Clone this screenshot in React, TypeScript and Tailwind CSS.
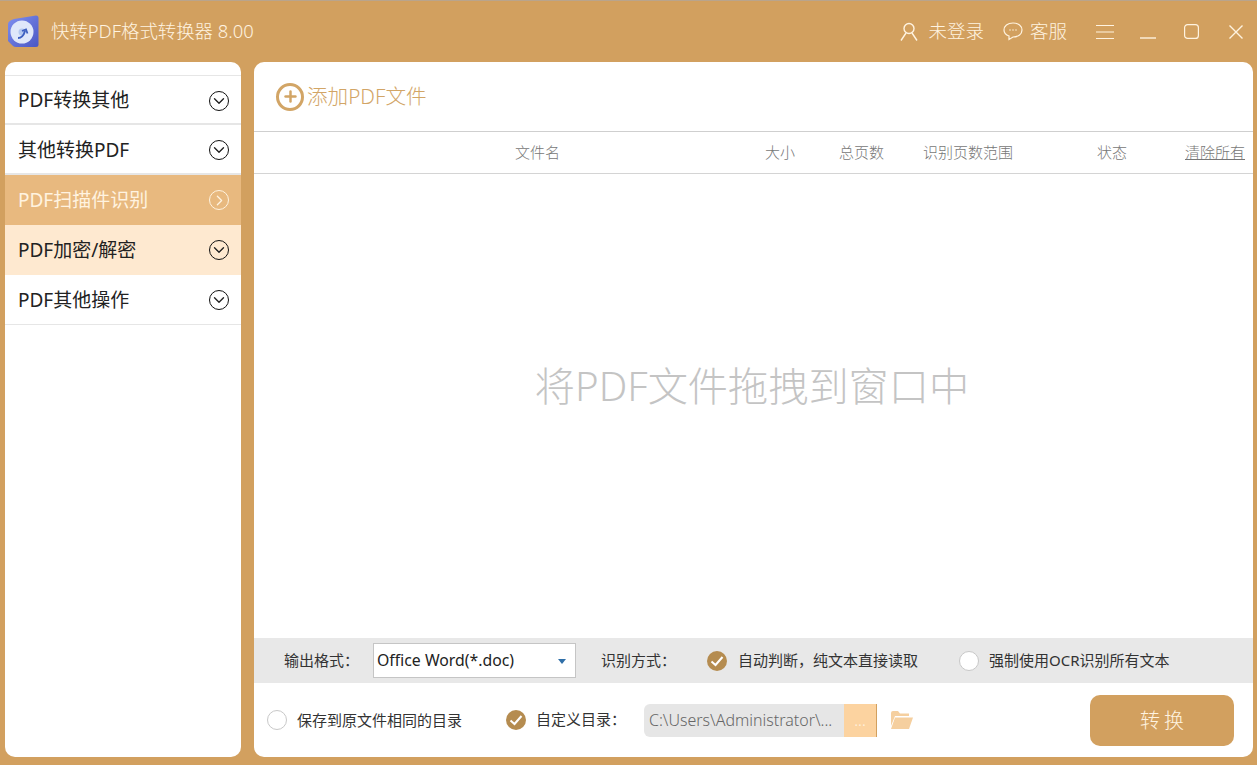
import { ChevronDown, ChevronRight, Plus } from "lucide-react";

const font = { fontFamily: '"Noto Sans", "Noto Sans CJK SC", sans-serif' };

const menu = [
  { label: "PDF转换其他", cls: "h-[49px] pt-[2px] bg-white text-[#222] border-b-2 border-[#e6e6e6]" },
  { label: "其他转换PDF", cls: "h-[50px] pt-[2px] bg-white text-[#222] border-b-2 border-[#e6e6e6]" },
  { label: "PDF扫描件识别", cls: "h-[50px] bg-[#e8b97f] text-[#fff3e0]", active: true },
  { label: "PDF加密/解密", cls: "h-[50px] bg-[#fee9d0] text-[#222]" },
  { label: "PDF其他操作", cls: "h-[50px] pt-px bg-white text-[#222] border-b border-[#e6e6e6]" },
];

function Logo() {
  return (
    <svg width="34" height="34" viewBox="0 0 34 34">
      <defs>
        <linearGradient id="lg" x1="0" y1="0" x2="1" y2="1">
          <stop offset="0" stopColor="#7f8ff0" />
          <stop offset="1" stopColor="#4a57c4" />
        </linearGradient>
      </defs>
      <path d="M8 4 L30 0.500 Q32.500 0.500 32.500 3 L32.500 30 Q32.500 32 30 32 L10 32 Q8 32 7 31 L2 26 L2 9 Q2 6 8 4 Z" fill="url(#lg)" />
      <circle cx="16" cy="17" r="11.500" fill="#dfe7fa" />
      <circle cx="16" cy="17" r="3.500" fill="#b4c8f0" />
      <path d="M12 23 Q17 23 19 16 M16 16 L20 14.500 L21.500 18.500" fill="none" stroke="#3d5fc0" strokeWidth="1.800" />
    </svg>
  );
}

function Check({ size }: { size: number }) {
  return (
    <span className="flex shrink-0 items-center justify-center rounded-full bg-[#b58c50]" style={{ width: size, height: size }}>
      <svg width="14" height="12" viewBox="0 0 14 12">
        <path d="M1.500 6.500 L5.500 10 L12.500 2" fill="none" stroke="#fff" strokeWidth="2" />
      </svg>
    </span>
  );
}

function Radio() {
  return <span className="h-5 w-5 shrink-0 rounded-full border border-[#c8c8c8] bg-white" />;
}

export default function App() {
  return (
    <div className="flex h-[765px] w-[1257px] flex-col overflow-hidden border-t border-[#b9a48c] bg-[#d2a05f]" style={font}>
      <header className="flex h-[61px] shrink-0 items-center pl-[6px] pr-[14px] text-[#fff3e0]">
        <Logo />
        <span className="-mt-[2px] ml-[11px] text-[18.400px] font-light">快转PDF格式转换器 8.00</span>
        <div className="ml-auto flex items-center">
          <svg width="20" height="20" viewBox="0 0 20 20" fill="none" stroke="#fff3e0" strokeWidth="1.400">
            <circle cx="10" cy="6.500" r="5" />
            <path d="M7 11 L2 18.500 M13 11 L18 18.500" />
          </svg>
          <span className="-mt-[2px] ml-[9px] text-[18.500px] font-light">未登录</span>
          <svg className="ml-[19px]" width="20" height="19" viewBox="0 0 20 19" fill="none" stroke="#fff3e0" strokeWidth="1.200">
            <path d="M10 1 C4.500 1 1 4 1 8 C1 11 3 13 6 14 L6 17.500 L10 15 C15.500 15 19 12 19 8 C19 4 15.500 1 10 1 Z" />
            <path d="M6.500 8 H7.500 M9.500 8 H10.500 M12.500 8 H13.500" strokeWidth="1.500" />
          </svg>
          <span className="-mt-[2px] ml-[7px] text-[18.500px] font-light">客服</span>
          <svg className="ml-[29px]" width="18" height="16" viewBox="0 0 18 16" stroke="#fff3e0" strokeWidth="1.200">
            <path d="M0 1.500 H18 M0 8 H18 M0 14.500 H18" />
          </svg>
          <svg className="ml-[26px]" width="16" height="16" viewBox="0 0 16 16" stroke="#fff3e0" strokeWidth="1.400">
            <path d="M0 14 H16" />
          </svg>
          <svg className="ml-[28px]" width="15" height="15" viewBox="0 0 15 15" fill="none" stroke="#fff3e0" strokeWidth="1.200">
            <rect x="0.600" y="0.600" width="13.800" height="13.800" rx="3" />
          </svg>
          <svg className="ml-[30px]" width="14" height="14" viewBox="0 0 14 14" stroke="#fff3e0" strokeWidth="1.400">
            <path d="M0.500 0.500 L13.500 13.500 M13.500 0.500 L0.500 13.500" />
          </svg>
        </div>
      </header>

      <div className="flex h-[695px] gap-[13px] pl-[5px] pr-[4px]">
        <aside className="w-[236px] shrink-0 overflow-hidden rounded-[10px] bg-white pt-[13px]">
          <div className="h-px bg-[#e6e6e6]" />
          {menu.map((m) => (
            <div key={m.label} className={`box-border flex items-center justify-between pl-[13px] pr-[12px] text-[19px] ${m.cls}`}>
              <span>{m.label}</span>
              <span className={`flex h-5 w-5 items-center justify-center rounded-full border-[1.500px] ${m.active ? "border-[#fff3e0]" : "border-[#111]"}`}>
                {m.active ? <ChevronRight size={17} strokeWidth={1.800} /> : <ChevronDown size={18} strokeWidth={1.800} />}
              </span>
            </div>
          ))}
        </aside>

        <main className="flex flex-1 flex-col overflow-hidden rounded-[10px] bg-white">
          <div className="flex h-[70px] shrink-0 items-center border-b border-[#cfcfcf] pl-[22px] text-[#d2a566]">
            <span className="flex h-[28px] w-[28px] items-center justify-center rounded-full border-[3px] border-[#d2a566]">
              <Plus size={17} strokeWidth={3.500} />
            </span>
            <span className="ml-[3px] text-[20.600px] font-light">添加PDF文件</span>
          </div>
          <div className="flex h-[42px] shrink-0 items-center border-b border-[#d4d4d4] pl-[261px] text-[15px] font-light text-[#777]">
            <span className="w-[250px]">文件名</span>
            <span className="w-[74px]">大小</span>
            <span className="w-[84px]">总页数</span>
            <span className="w-[174px]">识别页数范围</span>
            <span className="w-[88px]">状态</span>
            <span className="underline">清除所有</span>
          </div>
          <div className="flex flex-1 items-center justify-center pb-[40px] pr-[3px] text-[40.200px] font-light text-[#c4c4c4]">将PDF文件拖拽到窗口中</div>

          <div className="flex h-[45px] shrink-0 items-center bg-[#e8e8e8] pl-[30px] text-[15px] text-[#333]">
            <span className="w-[89px]">输出格式：</span>
            <div className="flex h-[35px] w-[203px] items-center justify-between border border-[#c5c5c5] bg-white pl-[3px] pr-[9px] text-[15.800px] text-[#222]">
              <span>Office Word(*.doc)</span>
              <span className="mt-[1px] h-0 w-0 border-x-[4px] border-t-[5px] border-x-transparent border-t-[#2f6fa8]" />
            </div>
            <span className="ml-[25px] w-[106px]">识别方式：</span>
            <Check size={20} />
            <span className="ml-[11px] w-[221px]">自动判断，纯文本直接读取</span>
            <Radio />
            <span className="ml-[10px]">强制使用OCR识别所有文本</span>
          </div>

          <div className="flex h-[74px] shrink-0 items-center pl-[13px] pr-[19px] text-[15px] text-[#333]">
            <Radio />
            <span className="ml-[10px] w-[209px]">保存到原文件相同的目录</span>
            <Check size={20} />
            <span className="-mt-[2px] ml-[10px] w-[108px]">自定义目录：</span>
            <div className="flex h-[33px] w-[233px] items-center overflow-hidden rounded-l-[6px] bg-[#e6e6e6] pl-[5px] text-[16px] font-light text-[#666]">
              <span className="w-[195px] whitespace-nowrap">C:\Users\Administrator\...</span>
              <span className="flex h-full w-[33px] shrink-0 items-center justify-center border-r border-[#d2a05f] bg-[#fcd3a0] text-[#fff3e0]">...</span>
            </div>
            <svg className="ml-[13px]" width="23" height="20" viewBox="0 0 23 20">
              <path d="M1 3 Q1 1 3 1 L8 1 L10 3.500 L19 3.500 L19 6 L5 6 L1 16 Z" fill="#f5cf9f" />
              <path d="M5 7.500 L23 7.500 L19 19 L1 19 Z" fill="#f5cf9f" />
            </svg>
            <button className="ml-auto h-[51px] w-[144px] rounded-[10px] bg-[#d2a05f] pl-[4px] pt-[2px] text-[20px] font-light tracking-[4px] text-[#fff3e0]">转换</button>
          </div>
        </main>
      </div>
    </div>
  );
}
